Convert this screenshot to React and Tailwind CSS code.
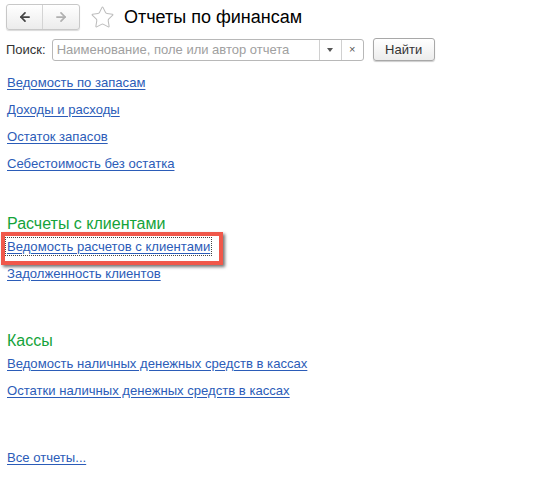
import { ArrowLeft, ArrowRight, Star } from 'lucide-react'

const ReportLink = ({ children }) => (
  <div className="h-[27px] flex items-center">
    <a href="#" className="text-[13.1px] text-[#2b5cb8] underline underline-offset-2 decoration-[#2b5cb8]">
      {children}
    </a>
  </div>
)

const GroupTitle = ({ children, className }) => (
  <div className={`h-[18px] flex items-center text-[16px] text-[#14a33a] ${className}`}>{children}</div>
)

const App = () => {
  return (
    <div className="w-[554px] h-[502px] bg-white text-[#333] font-['Liberation_Sans',Arial,sans-serif]">
      {/* Header */}
      <div className="flex items-center pt-[4px] pl-[6px] h-[30px]">
        <div className="flex h-[26px] w-[74px] border border-[#c8c8c8] rounded-[3px] bg-gradient-to-b from-white to-[#ececec] shadow-[0_1px_1px_rgba(0,0,0,0.15)]">
          <div className="w-[37px] flex items-center justify-center border-r border-[#d4d4d4]">
            <ArrowLeft size={14} strokeWidth={3} className="text-[#444]" />
          </div>
          <div className="w-[37px] flex items-center justify-center">
            <ArrowRight size={14} strokeWidth={3} className="text-[#b0b0b0]" />
          </div>
        </div>
        <Star size={25} strokeWidth={1} className="ml-[10px] text-[#bdbdbd]" />
        <div className="ml-[9px] text-[18px] text-black">Отчеты по финансам</div>
      </div>

      {/* Search */}
      <div className="flex items-center h-[23px] mt-[8px] pl-[6px]">
        <span className="text-[13px] text-[#333]">Поиск:</span>
        <div className="ml-[6px] flex h-[22px] w-[312px] border border-[#b8b8b8] rounded-[3px] bg-white">
          <div className="flex-1 flex items-center pl-[4px] text-[13px] text-[#a0a0a0]">
            Наименование, поле или автор отчета
          </div>
          <div className="w-[22px] flex items-center justify-center border-l border-[#d0d0d0]">
            <span className="block w-0 h-0 border-l-[3px] border-r-[3px] border-t-[4px] border-l-transparent border-r-transparent border-t-[#555]" />
          </div>
          <div className="w-[22px] flex items-center justify-center border-l border-[#d0d0d0] text-[11px] text-[#555]">
            ×
          </div>
        </div>
        <button className="ml-[9px] h-[23px] w-[62px] border border-[#a8a8a8] rounded-[3px] bg-gradient-to-b from-white to-[#ececec] text-[13px] font-normal text-[#333] shadow-[0_1px_1px_rgba(0,0,0,0.2)]">
          Найти
        </button>
      </div>

      {/* Reports */}
      <div className="pl-[7px] mt-[8px]">
        <ReportLink>Ведомость по запасам</ReportLink>
        <ReportLink>Доходы и расходы</ReportLink>
        <ReportLink>Остаток запасов</ReportLink>
        <ReportLink>Себестоимость без остатка</ReportLink>

        <GroupTitle className="mt-[38px]">Расчеты с клиентами</GroupTitle>
        <div className="relative">
          <ReportLink>
            <span className="outline outline-1 outline-dotted outline-[#444] outline-offset-1">Ведомость расчетов с клиентами</span>
          </ReportLink>
          {/* red highlight */}
          <div className="absolute left-[-6px] top-[-1px] w-[222px] h-[33px] border-[4px] border-[#f0584a] shadow-[2px_2px_3px_rgba(0,0,0,0.55)] pointer-events-none" />
        </div>
        <ReportLink>Задолженность клиентов</ReportLink>

        <GroupTitle className="mt-[45px]">Кассы</GroupTitle>
        <ReportLink>Ведомость наличных денежных средств в кассах</ReportLink>
        <ReportLink>Остатки наличных денежных средств в кассах</ReportLink>

        <div className="mt-[40px]">
          <ReportLink>Все отчеты...</ReportLink>
        </div>
      </div>
    </div>
  )
}

export default App
